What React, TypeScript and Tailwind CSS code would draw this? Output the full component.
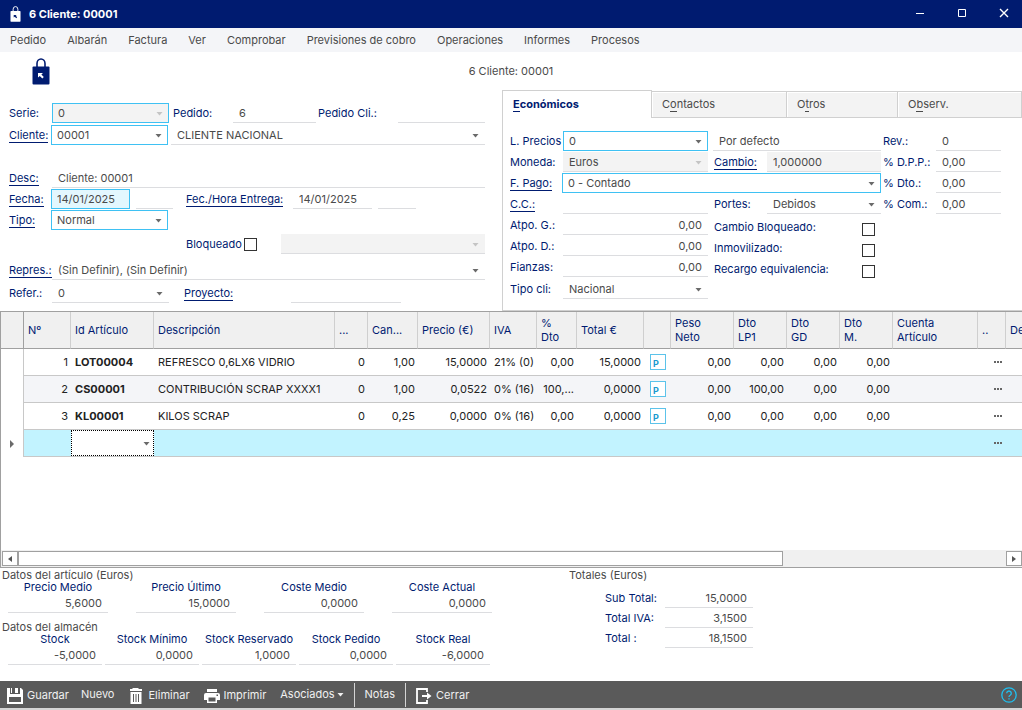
import { ReactNode, useState } from "react";
import clsx from "clsx";

const menuItems = [
  "Pedido",
  "Albarán",
  "Factura",
  "Ver",
  "Comprobar",
  "Previsiones de cobro",
  "Operaciones",
  "Informes",
  "Procesos",
];

const tabs = [
  { id: "economicos", before: "", key: "E", after: "conómicos", width: "w-[149px]" },
  { id: "contactos", before: "C", key: "o", after: "ntactos", width: "w-[135px]" },
  { id: "otros", before: "O", key: "t", after: "ros", width: "w-[111px]" },
  { id: "observ", before: "O", key: "b", after: "serv.", width: "flex-1" },
];

const columns = [
  { label: "", width: 23 },
  { label: "Nº", width: 47 },
  { label: "Id Artículo", width: 83 },
  { label: "Descripción", width: 181 },
  { label: "...", width: 33 },
  { label: "Can...", width: 50 },
  { label: "Precio (€)", width: 72 },
  { label: "IVA", width: 47 },
  { label: "%\nDto", width: 40 },
  { label: "Total €", width: 67 },
  { label: "", width: 27 },
  { label: "Peso\nNeto", width: 63 },
  { label: "Dto\nLP1", width: 53 },
  { label: "Dto\nGD", width: 53 },
  { label: "Dto\nM.", width: 53 },
  { label: "Cuenta\nArtículo", width: 85 },
  { label: "..", width: 28 },
  { label: "De", width: 300 },
];

const lines = [
  {
    n: 1,
    id: "LOT00004",
    desc: "REFRESCO 0,6LX6 VIDRIO",
    alm: "0",
    cant: "1,00",
    precio: "15,0000",
    iva: "21% (0)",
    dto: "0,00",
    total: "15,0000",
    extra: ["0,00", "0,00", "0,00", "0,00"],
  },
  {
    n: 2,
    id: "CS00001",
    desc: "CONTRIBUCIÓN SCRAP XXXX1",
    alm: "0",
    cant: "1,00",
    precio: "0,0522",
    iva: "0% (16)",
    dto: "100,...",
    total: "0,0000",
    extra: ["0,00", "100,00", "0,00", "0,00"],
  },
  {
    n: 3,
    id: "KL00001",
    desc: "KILOS SCRAP",
    alm: "0",
    cant: "0,25",
    precio: "0,0000",
    iva: "0% (16)",
    dto: "0,00",
    total: "0,0000",
    extra: ["0,00", "0,00", "0,00", "0,00"],
  },
];

const articleData = [
  { label: "Precio Medio", value: "5,6000" },
  { label: "Precio Último", value: "15,0000" },
  { label: "Coste Medio", value: "0,0000" },
  { label: "Coste Actual", value: "0,0000" },
];

const stockData = [
  { label: "Stock", value: "-5,0000" },
  { label: "Stock Mínimo", value: "0,0000" },
  { label: "Stock Reservado", value: "1,0000" },
  { label: "Stock Pedido", value: "0,0000" },
  { label: "Stock Real", value: "-6,0000" },
];

const totals = [
  { label: "Sub Total:", value: "15,0000" },
  { label: "Total IVA:", value: "3,1500" },
  { label: "Total :", value: "18,1500" },
];

const LockIcon = ({ className, body, arrow }: { className: string; body: string; arrow: string }) => (
  <svg viewBox="0 0 18 27" className={className} aria-hidden="true">
    <path d="M5 9V5.5a4 4.5 0 0 1 8 0V9" fill="none" stroke={body} strokeWidth="1.6" />
    <rect x="0.5" y="8.5" width="17" height="18" rx="1" fill={body} />
    <path d="M6 15h5l-1.6 1.6 2.4 2.4-1.5 1.5-2.5-2.5L6 19.6z" fill={arrow} />
  </svg>
);

const Caret = ({ className }: { className?: string }) => (
  <svg viewBox="0 0 7 4" className={clsx("w-[7px] h-1", className)} aria-hidden="true">
    <path d="M0.500 0h6L3.500 3.500z" fill="currentColor" />
  </svg>
);

const Dots = () => (
  <svg viewBox="0 0 8 2" className="w-2 h-0.5" aria-hidden="true">
    <path d="M0 0h2v2H0zM3 0h2v2H3zM6 0h2v2H6z" fill="#666" />
  </svg>
);

const Label = ({
  htmlFor,
  link,
  className,
  children,
}: {
  htmlFor: string;
  link?: boolean;
  className?: string;
  children: ReactNode;
}) => (
  <label htmlFor={htmlFor} className={clsx("shrink-0 text-[#001b70] whitespace-nowrap", className)}>
    <span className={clsx("inline-block leading-[14px]", link && "border-b border-[#001b70]")}>
      {children}
    </span>
  </label>
);

type FieldProps = {
  id: string;
  value?: string;
  className?: string;
  variant?: "line" | "box" | "gray" | "grayBox" | "blue";
  right?: boolean;
  name?: string;
};

const variants = {
  line: "border-b border-[#dcdde0] pl-1.5",
  box: "border border-[#3fc1f3] pl-[5px]",
  gray: "border-b border-[#dcdde0] bg-[#f3f3f3] pl-1.5",
  grayBox: "border border-[#3fc1f3] bg-[#f3f3f3] pl-[5px]",
  blue: "border border-[#3fc1f3] bg-[#e3f7fe] pl-[5px]",
};

const Field = ({ id, value = "", className, variant = "line", right, name }: FieldProps) => (
  <input
    id={id}
    defaultValue={value}
    aria-label={name}
    className={clsx(
      "min-w-0 h-5 text-[#4a4a4a] outline-none",
      variants[variant],
      right && "text-right pr-1.5",
      className
    )}
  />
);

const SelectField = ({ id, value = "", className, variant = "line", name }: FieldProps) => {
  const disabled = variant === "gray" || variant === "grayBox";
  const boxed = variant === "box" || variant === "grayBox";
  return (
    <div className={clsx("relative min-w-0 h-5", className)}>
      <select
        id={id}
        aria-label={name}
        className={clsx(
          "block w-full h-full appearance-none rounded-none pr-4 text-[#4a4a4a] outline-none",
          !disabled && "bg-white",
          !boxed && "pt-px",
          variants[variant]
        )}
      >
        <option>{value}</option>
      </select>
      <Caret
        className={clsx(
          "absolute right-1.5 top-[9px] pointer-events-none",
          disabled ? "text-[#c4c4c4]" : "text-[#6a6a6a]"
        )}
      />
    </div>
  );
};

const Checkbox = ({ id }: { id: string }) => (
  <input
    id={id}
    type="checkbox"
    className="appearance-none shrink-0 size-[13px] border border-[#333] bg-white checked:bg-[#001b70]"
  />
);

const OrderForm = () => (
  <div className="pl-[9px] pr-[17px] pt-[13px]">
    <div className="flex items-center">
      <Label htmlFor="serie" className="w-[43px]">Serie:</Label>
      <SelectField id="serie" value="0" variant="grayBox" className="w-[117px]" />
      <Label htmlFor="pedido" className="w-[60px] ml-1">Pedido:</Label>
      <Field id="pedido" value="6" className="w-[83px]" />
      <Label htmlFor="pedidoCli" className="w-20 ml-0.5">Pedido Cli.:</Label>
      <Field id="pedidoCli" className="flex-1" />
    </div>
    <div className="flex items-center mt-0.5">
      <Label htmlFor="cliente" link className="w-[42px]">Cliente:</Label>
      <SelectField id="cliente" value="00001" variant="box" className="w-[117px]" />
      <SelectField
        id="clienteNombre"
        name="Nombre del cliente"
        value="CLIENTE NACIONAL"
        className="flex-1 ml-[3px]"
      />
    </div>
    <div className="flex items-center mt-[23px]">
      <Label htmlFor="desc" link className="w-[43px]">Desc:</Label>
      <Field id="desc" value="Cliente: 00001" className="flex-1" />
    </div>
    <div className="flex items-center mt-px">
      <Label htmlFor="fecha" link className="w-[42px]">Fecha:</Label>
      <Field id="fecha" value="14/01/2025" variant="blue" className="w-[79px]" />
      <Field id="hora" name="Hora" className="w-[37px] ml-1.5" />
      <Label htmlFor="entrega" link className="w-[107px] ml-[13px]">Fec./Hora Entrega:</Label>
      <Field id="entrega" value="14/01/2025" className="w-[79px]" />
      <Field id="horaEntrega" name="Hora de entrega" className="w-[38px] ml-1.5" />
    </div>
    <div className="flex items-center mt-px">
      <Label htmlFor="tipo" link className="w-[42px]">Tipo:</Label>
      <SelectField id="tipo" value="Normal" variant="box" className="w-[117px]" />
    </div>
    <div className="flex items-center mt-1 pl-[177px]">
      <Label htmlFor="bloqueado" className="w-[58px]">Bloqueado</Label>
      <Checkbox id="bloqueado" />
      <SelectField id="motivo" name="Motivo" variant="gray" className="flex-1 ml-6" />
    </div>
    <div className="flex items-center mt-1.5">
      <Label htmlFor="repres" link className="w-[43px]">Repres.:</Label>
      <SelectField id="repres" value="(Sin Definir), (Sin Definir)" className="flex-1" />
    </div>
    <div className="flex items-center mt-[3px]">
      <Label htmlFor="refer" className="w-[43px]">Refer.:</Label>
      <SelectField id="refer" value="0" className="w-[117px]" />
      <Label htmlFor="proyecto" link className="w-[107px] ml-[15px]">Proyecto:</Label>
      <Field id="proyecto" className="w-[110px]" />
    </div>
  </div>
);

const EconomicPanel = () => (
  <div className="flex gap-0.5 pl-[7px] pr-[21px] pt-[13px] pb-[11px]">
    <div className="flex-1 min-w-0">
      <div className="flex items-center">
        <Label htmlFor="lprecios" className="w-[53px]">L. Precios</Label>
        <SelectField id="lprecios" value="0" variant="box" className="w-[145px]" />
        <Field id="tarifa" name="Tarifa" value="Por defecto" className="flex-1 ml-[5px]" />
      </div>
      <div className="flex items-center mt-px">
        <Label htmlFor="moneda" className="w-[53px]">Moneda:</Label>
        <SelectField id="moneda" value="Euros" variant="gray" className="w-[145px]" />
        <Label htmlFor="cambio" link className="w-[53px] ml-1.5">Cambio:</Label>
        <Field id="cambio" value="1,000000" variant="gray" className="flex-1" />
      </div>
      <div className="flex items-center mt-px">
        <Label htmlFor="fpago" link className="w-[52px]">F. Pago:</Label>
        <SelectField id="fpago" value="0 - Contado" variant="box" className="flex-1" />
      </div>
      <div className="flex items-center mt-px">
        <Label htmlFor="cc" link className="w-[53px]">C.C.:</Label>
        <Field id="cc" className="w-[145px]" />
        <Label htmlFor="portes" className="w-[53px] ml-1.5">Portes:</Label>
        <SelectField id="portes" value="Debidos" className="flex-1" />
      </div>
      <div className="flex mt-px">
        <div className="flex flex-col gap-px">
          <div className="flex items-center">
            <Label htmlFor="atpoG" className="w-[53px]">Atpo. G.:</Label>
            <Field id="atpoG" value="0,00" right className="w-[145px]" />
          </div>
          <div className="flex items-center">
            <Label htmlFor="atpoD" className="w-[53px]">Atpo. D.:</Label>
            <Field id="atpoD" value="0,00" right className="w-[145px]" />
          </div>
          <div className="flex items-center">
            <Label htmlFor="fianzas" className="w-[53px]">Fianzas:</Label>
            <Field id="fianzas" value="0,00" right className="w-[145px]" />
          </div>
          <div className="flex items-center mt-px">
            <Label htmlFor="tipoCli" className="w-[53px]">Tipo cli:</Label>
            <SelectField id="tipoCli" value="Nacional" className="w-[145px]" />
          </div>
        </div>
        <div className="flex flex-col flex-1 gap-px pt-1 pl-1.5 pr-1.5">
          <div className="flex items-center justify-between h-5">
            <Label htmlFor="cambioBloq" className="pb-1">Cambio Bloqueado:</Label>
            <Checkbox id="cambioBloq" />
          </div>
          <div className="flex items-center justify-between h-5">
            <Label htmlFor="inmov" className="pb-1">Inmovilizado:</Label>
            <Checkbox id="inmov" />
          </div>
          <div className="flex items-center justify-between h-5">
            <Label htmlFor="recargo" className="pb-1">Recargo equivalencia:</Label>
            <Checkbox id="recargo" />
          </div>
        </div>
      </div>
    </div>
    <div className="flex flex-col gap-px w-[118px]">
      {[
        { id: "rev", label: "Rev.:", value: "0" },
        { id: "dpp", label: "% D.P.P.:", value: "0,00" },
        { id: "dto", label: "% Dto.:", value: "0,00" },
        { id: "com", label: "% Com.:", value: "0,00" },
      ].map((f) => (
        <div key={f.id} className="flex items-center">
          <Label htmlFor={f.id} className="w-[53px]">{f.label}</Label>
          <Field id={f.id} value={f.value} className="flex-1" />
        </div>
      ))}
    </div>
  </div>
);

const LinesTable = () => {
  const total = columns.reduce((sum, c) => sum + c.width, 0);
  const num = "text-right pr-[3px]";

  return (
    <table
      className="table-fixed border-separate border-spacing-0 text-[#222]"
      style={{ width: total }}
    >
      <colgroup>
        {columns.map((c, i) => (
          <col key={i} style={{ width: c.width }} />
        ))}
      </colgroup>
      <thead>
        <tr className="h-[37px] bg-[#f0f0f0] text-[#001b70] text-left">
          {columns.map((c, i) => (
            <th
              key={i}
              className={clsx(
                "px-1 py-0 font-normal leading-[14px] whitespace-pre-line border-b border-b-[#a0a0a0] border-r",
                i === 0 ? "border-r-[#a0a0a0]" : "border-r-[#cfcfcf]"
              )}
            >
              {c.label}
            </th>
          ))}
        </tr>
      </thead>
      <tbody className="[&_td]:py-0 [&_td]:whitespace-nowrap [&_td+td]:border-b [&_td+td]:border-[#c8c8c8]">
        {lines.map((l) => (
          <tr key={l.n} className="h-[27px] [&:nth-child(even)>td+td]:bg-[#f4f5f8]">
            <td className="border-r border-[#c8c8c8]" />
            <td className={num}>{l.n}</td>
            <td className="pl-1 font-bold">{l.id}</td>
            <td className="pl-1">{l.desc}</td>
            <td className={num}>{l.alm}</td>
            <td className={num}>{l.cant}</td>
            <td className={num}>{l.precio}</td>
            <td className="pl-1">{l.iva}</td>
            <td className={num}>{l.dto}</td>
            <td className={num}>{l.total}</td>
            <td className="pl-1.5">
              <button className="flex items-end size-4 pl-0.5 border border-[#5cc3ea] bg-white text-[9px] leading-[10px] font-bold text-[#1a9ad0]">
                P
              </button>
            </td>
            {l.extra.map((v, i) => (
              <td key={i} className={num}>
                {v}
              </td>
            ))}
            <td />
            <td>
              <button className="flex items-center justify-center w-full h-5 pl-3" aria-label="Más">
                <Dots />
              </button>
            </td>
            <td />
          </tr>
        ))}
        {/* New line row */}
        <tr className="h-[27px] [&>td+td]:bg-[#c2f3ff]">
          <td className="border-r border-[#c8c8c8]">
            <svg viewBox="0 0 4 8" className="w-1 h-2 mx-auto" aria-hidden="true">
              <path d="M0 0l4 4-4 4z" fill="#6a6a6a" />
            </svg>
          </td>
          <td />
          <td className="p-0">
            <div className="relative h-[26px]">
              <select
                aria-label="Id Artículo"
                className="block w-full h-full appearance-none rounded-none bg-white border border-dotted border-black outline-none"
              >
                <option></option>
              </select>
              <Caret className="absolute right-1 top-3 text-[#6a6a6a] pointer-events-none" />
            </div>
          </td>
          <td colSpan={13} />
          <td>
            <button className="flex items-center justify-center w-full h-5 pl-3" aria-label="Más">
              <Dots />
            </button>
          </td>
          <td />
        </tr>
      </tbody>
    </table>
  );
};

const DataBlock = ({
  title,
  items,
  className,
  width,
}: {
  title: string;
  items: { label: string; value: string }[];
  className: string;
  width: string;
}) => (
  <div>
    <h2 className="pl-0.5 leading-3 text-[#4a4a4a]">{title}</h2>
    <div className={clsx("flex pl-2", className)}>
      {items.map((it) => (
        <div key={it.label} className={clsx("flex flex-col", width)}>
          <label htmlFor={it.label} className="leading-3 text-center text-[#001b70] whitespace-nowrap">
            {it.label}
          </label>
          <Field id={it.label} value={it.value} right className="w-full" />
        </div>
      ))}
    </div>
  </div>
);

const ToolButton = ({ icon, children }: { icon?: ReactNode; children: ReactNode }) => (
  <button className={clsx("flex items-center gap-1 h-full hover:bg-[#6c6c6c]", icon && "pt-0.5")}>
    {icon}
    {children}
  </button>
);

const SaveIcon = () => (
  <svg viewBox="0 0 16 16" className="size-4" fill="#fff" aria-hidden="true">
    <path d="M0 0h3v6h10V0h1l2 2v14H0zM2 9v5h12V9z" fillRule="evenodd" />
    <path d="M8 0h3v5H8zM4 0h1v5H4z" />
  </svg>
);

const TrashIcon = () => (
  <svg viewBox="-1 0 16 16" className="size-4" aria-hidden="true">
    <path d="M4 0h5l1 1h3v2H1V1h2zM1.5 4h11v12h-11z" fill="#fff" />
    <path d="M4.5 6v8M7 6v8M9.5 6v8" stroke="#5a5a5a" />
  </svg>
);

const PrintIcon = () => (
  <svg viewBox="0 0 16 16" className="size-4" aria-hidden="true">
    <path d="M3 1h10v3H3zM2 5h12a2 2 0 0 1 2 2v5h-3v3H3v-3H0V7a2 2 0 0 1 2-2z" fill="#fff" />
    <path d="M4.500 9.500h7v4h-7z" fill="#5a5a5a" />
    <path d="M12.500 6.500h1.500v1.500h-1.500z" fill="#5a5a5a" />
  </svg>
);

const ExitIcon = () => (
  <svg viewBox="0 0 16 16" className="size-4" aria-hidden="true">
    <path d="M11 4V1H1v14h10v-3" fill="none" stroke="#fff" strokeWidth="1.8" />
    <path d="M6 7h5V4.500L15.500 8 11 11.500V9H6z" fill="#fff" />
  </svg>
);

const App = () => {
  const [activeTab, setActiveTab] = useState("economicos");

  return (
    <div className="flex flex-col min-h-screen overflow-hidden bg-white font-['Inter',sans-serif] text-[11px] text-[#4a4a4a]">
      <header className="flex items-center h-7 pl-[10px] pr-3 bg-[#001b70] text-white">
        <LockIcon className="w-[11px] h-4" body="#fff" arrow="#001b70" />
        <h1 className="ml-2 font-bold">6 Cliente: 00001</h1>
        <div className="flex ml-auto gap-[30px]">
          <button aria-label="Minimizar">
            <svg viewBox="0 0 12 12" className="size-3" stroke="#fff" fill="none">
              <path d="M2 5.500h8" />
            </svg>
          </button>
          <button aria-label="Maximizar">
            <svg viewBox="0 0 12 12" className="size-3" stroke="#fff" fill="none">
              <path d="M2.500 1.500h7v7h-7z" />
            </svg>
          </button>
          <button aria-label="Cerrar ventana">
            <svg viewBox="0 0 12 12" className="size-3" stroke="#fff" strokeWidth="1.4" fill="none">
              <path d="M2 1l8 8M10 1l-8 8" />
            </svg>
          </button>
        </div>
      </header>

      <nav className="flex items-center h-6 pl-[10px] gap-[21px] bg-[#f4f5f8]">
        {menuItems.map((item) => (
          <button key={item} className="hover:text-black">
            {item}
          </button>
        ))}
      </nav>

      <div className="grid grid-cols-[1fr_auto_1fr] items-center h-[38px] pl-8">
        <LockIcon className="w-[18px] h-[27px]" body="#001b70" arrow="#fff" />
        <span className="-ml-8">6 Cliente: 00001</span>
      </div>

      <section className="grid grid-cols-[minmax(0,502fr)_minmax(0,520fr)]">
        <OrderForm />
        <div className="border-l border-b border-[#d0d0d0]">
          <div role="tablist" className="flex items-end h-7">
            {tabs.map((t) => (
              <button
                key={t.id}
                role="tab"
                aria-selected={activeTab === t.id}
                onClick={() => setActiveTab(t.id)}
                className={clsx(
                  "pl-[10px] text-left border-t border-r border-[#d0d0d0]",
                  t.width,
                  activeTab === t.id
                    ? "h-7 font-bold text-[#001b70]"
                    : "h-[27px] bg-[#f3f3f3] border-b shadow-[inset_1px_1px_0_#fff]"
                )}
              >
                {t.before}
                <span className="inline-block leading-[13px] border-b border-current">{t.key}</span>
                {t.after}
              </button>
            ))}
          </div>
          <EconomicPanel />
        </div>
      </section>

      <section className="flex flex-col flex-1 border-t border-l border-b border-[#a0a0a0]">
        <div className="flex-1 overflow-hidden">
          <LinesTable />
        </div>
        <div className="flex items-center h-[17px] pl-px bg-[#f0f0f0]">
          <button
            aria-label="Desplazar a la izquierda"
            className="flex items-center justify-center w-4 h-[15px] border border-[#a0a0a0] bg-white"
          >
            <svg viewBox="0 0 4 6" className="w-1 h-1.5" fill="#555">
              <path d="M4 0v6L0 3z" />
            </svg>
          </button>
          <div className="flex-1">
            <div className="w-[77.4%] h-[15px] border border-[#a0a0a0] bg-white" />
          </div>
          <button
            aria-label="Desplazar a la derecha"
            className="flex items-center justify-center w-4 h-[15px] border border-[#a0a0a0] bg-white"
          >
            <svg viewBox="0 0 4 6" className="w-1 h-1.5" fill="#555">
              <path d="M0 0v6l4-3z" />
            </svg>
          </button>
        </div>
      </section>

      <section className="flex pt-px pb-4">
        <div className="flex flex-col gap-2 w-[569px] shrink-0">
          <DataBlock title="Datos del artículo (Euros)" items={articleData} className="gap-7" width="w-[100px]" />
          <DataBlock title="Datos del almacén" items={stockData} className="gap-[3px]" width="w-[94px]" />
        </div>
        <div>
          <h2 className="leading-3">Totales (Euros)</h2>
          <div className="pt-[7px] pl-9">
            {totals.map((t) => (
              <div key={t.label} className="flex items-center">
                <Label htmlFor={t.label} className="w-[60px]">{t.label}</Label>
                <Field id={t.label} value={t.value} right className="w-[88px]" />
              </div>
            ))}
          </div>
        </div>
      </section>

      <footer className="flex items-center h-[29px] pl-[7px] pr-[5px] gap-[14px] bg-[#5a5a5a] border-b-2 border-[#d4d4d4] text-[#f0f0f0]">
        <div className="flex items-center h-full gap-3">
          <ToolButton icon={<SaveIcon />}>Guardar</ToolButton>
          <ToolButton>Nuevo</ToolButton>
        </div>
        <ToolButton icon={<TrashIcon />}>Eliminar</ToolButton>
        <ToolButton icon={<PrintIcon />}>Imprimir</ToolButton>
        <div className="flex items-center h-full gap-[10px]">
          <ToolButton>
            Asociados
            <Caret className="-ml-0.5" />
          </ToolButton>
          <span className="w-px h-6 bg-[#d4d4d4]" />
          <ToolButton>Notas</ToolButton>
          <span className="w-px h-6 bg-[#d4d4d4]" />
          <ToolButton icon={<ExitIcon />}>Cerrar</ToolButton>
        </div>
        <button className="ml-auto" aria-label="Ayuda">
          <svg viewBox="0 0 16 16" className="size-4" fill="none" stroke="#1fc0f0" strokeWidth="1.3">
            <circle cx="8" cy="8" r="7.2" />
            <path d="M5.700 6.300a2.300 2.300 0 1 1 3.500 2C8.300 8.800 8 9.200 8 10M8 11.300v1.300" />
          </svg>
        </button>
      </footer>
    </div>
  );
};

export default App;
